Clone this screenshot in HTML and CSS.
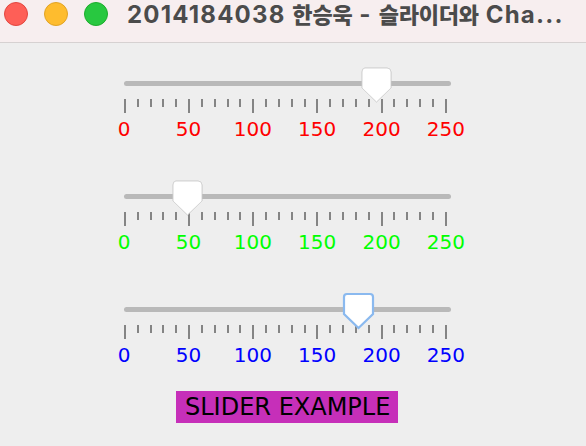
FILE: index.html
```html
<!DOCTYPE html>
<html lang="ko">
<head>
    <meta charset="UTF-8">
    <title>2014184038 한승욱 - 슬라이더와 ChangeListener</title>
    <link rel="stylesheet" href="styles.css">
</head>
<body>
    <div class="window">
        <div class="titlebar">
            <div class="lights">
                <span class="light red"></span>
                <span class="light yellow"></span>
                <span class="light green"></span>
            </div>
            <div class="title">2014184038 <span class="ko">한승욱</span> - <span class="ko">슬라이더와</span> Cha...</div>
        </div>

        <div class="content">
            <div class="slider red-labels">
                <div class="track-row">
                    <div class="track"></div>
                    <svg class="thumb" style="left: 257px" width="31" height="36" viewBox="0 0 31 36">
                        <path d="M4,1 H26 Q30,1 30,5 V21 L15.5,35 L1,21 V5 Q1,1 4,1 Z" fill="#fff" stroke="#d4d4d4" stroke-width="1"/>
                    </svg>
                </div>
                <div class="ticks"></div>
                <div class="labels"><span>0</span><span>50</span><span>100</span><span>150</span><span>200</span><span>250</span></div>
            </div>

            <div class="slider green-labels">
                <div class="track-row">
                    <div class="track"></div>
                    <svg class="thumb" style="left: 68px" width="31" height="36" viewBox="0 0 31 36">
                        <path d="M4,1 H26 Q30,1 30,5 V21 L15.5,35 L1,21 V5 Q1,1 4,1 Z" fill="#fff" stroke="#d4d4d4" stroke-width="1"/>
                    </svg>
                </div>
                <div class="ticks"></div>
                <div class="labels"><span>0</span><span>50</span><span>100</span><span>150</span><span>200</span><span>250</span></div>
            </div>

            <div class="slider blue-labels">
                <div class="track-row">
                    <div class="track"></div>
                    <svg class="thumb focused" style="left: 239px" width="33" height="38" viewBox="0 0 33 38">
                        <path d="M5,2 H28 Q31,2 31,5 V22 L16.5,36 L2,22 V5 Q2,2 5,2 Z" fill="#fff" stroke="#8ab9ef" stroke-width="2.2"/>
                    </svg>
                </div>
                <div class="ticks"></div>
                <div class="labels"><span>0</span><span>50</span><span>100</span><span>150</span><span>200</span><span>250</span></div>
            </div>

            <div class="caption">SLIDER EXAMPLE</div>
        </div>
    </div>

    <script>
        // 0..250, minor tick every 10, major every 50
        document.querySelectorAll('.ticks').forEach(function (row) {
            for (let v = 0; v <= 250; v += 10) {
                const t = document.createElement('span');
                t.className = v % 50 === 0 ? 'tick major' : 'tick';
                row.appendChild(t);
            }
        });
    </script>
</body>
</html>
```

FILE: styles.css
```css
body {
    margin: 0;
    background-color: #eeeeee;
    font-family: "DejaVu Sans", sans-serif;
}
.window {
    width: 586px;
    height: 446px;
    overflow: hidden;
}
.titlebar {
    height: 42px;
    background-color: #f7eeef;
    border-bottom: 1px solid #d6d1d1;
    display: flex;
    align-items: center;
}
.lights {
    display: flex;
    gap: 16px;
    padding-left: 4px;
    margin-top: -15px;
}
.light {
    width: 22px;
    height: 22px;
    border-radius: 50%;
    display: block;
}
.red { background-color: #fe5f57; border: 1px solid #e2463f; }
.yellow { background-color: #febc2e; border: 1px solid #e1a325; }
.green { background-color: #28c840; border: 1px solid #1dac2c; }
.title {
    margin-left: 19px;
    margin-top: -16px;
    font-family: Inter, "Noto Sans CJK KR", sans-serif;
    font-weight: bold;
    font-size: 24px;
    letter-spacing: 1.2px;
    color: #4b4b4b;
    white-space: nowrap;
}
.title .ko {
    font-size: 22px;
    font-weight: 900;
    letter-spacing: -0.2px;
}
.content {
    padding: 28px 0 0 104px;
    display: flex;
    flex-direction: column;
    gap: 44px;
}
.slider {
    width: 362px;
}
.track-row {
    position: relative;
    height: 24px;
    display: flex;
    align-items: center;
    padding-left: 20px;
}
.track {
    width: 327px;
    height: 5px;
    border-radius: 3px;
    background-color: #b9b9b9;
}
.thumb {
    position: absolute;
    top: -4px;
    filter: drop-shadow(0 0.5px 0.5px rgba(0,0,0,0.12));
}
.thumb.focused {
    top: -5px;
    margin-left: -1px;
    filter: none;
}
.ticks {
    margin-top: 4px;
    height: 14px;
    padding: 0 19px 0 20px;
    display: flex;
    justify-content: space-between;
    align-items: flex-start;
}
.tick {
    width: 2px;
    height: 8px;
    background-color: #848484;
}
.tick.major {
    height: 14px;
}
.labels {
    margin-top: 5px;
    height: 22px;
    display: flex;
    justify-content: space-between;
    font-size: 20px;
    line-height: 22px;
}
.labels span {
    width: 40px;
    text-align: center;
}
.red-labels .labels { color: #ff0000; }
.green-labels .labels { color: #00ff00; }
.blue-labels .labels { color: #0000ff; }
.caption {
    align-self: flex-start;
    margin: -19px 0 0 72px;
    height: 32px;
    line-height: 32px;
    padding: 0 8px 0 9px;
    background-color: #c62fb9;
    color: #000;
    font-size: 24px;
}
```
